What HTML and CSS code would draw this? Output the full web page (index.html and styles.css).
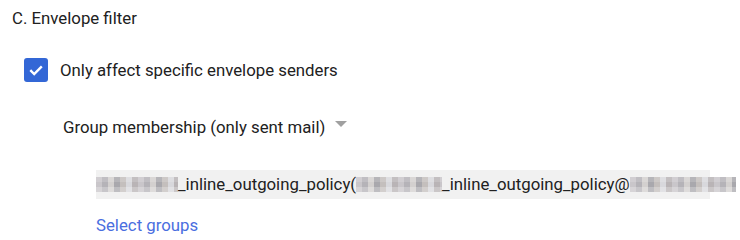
FILE: index.html
```html
<!DOCTYPE html>
<html>
<head>
<meta charset="utf-8">
<link rel="stylesheet" href="styles.css">
</head>
<body>
<div class="section">
  <div class="title">C. Envelope filter</div>
  <label class="check-row">
    <span class="checkbox">
      <svg width="16" height="16" viewBox="0 0 16 16"><path d="M2.3 8.2 L6.2 12 L13.8 4.4" fill="none" stroke="#fff" stroke-width="2.4"/></svg>
    </span>
    <span class="check-label">Only affect specific envelope senders</span>
  </label>
  <div class="select-row">
    <span class="select-label">Group membership (only sent mail)</span>
    <span class="caret"></span>
  </div>
  <div class="chip-row">
    <div class="chip"><span class="redact r1"></span>_inline_outgoing_policy(<span class="redact r2"></span>_inline_outgoing_policy@<span class="redact r3"></span></div>
  </div>
  <a class="link" href="#">Select groups</a>
</div>
</body>
</html>
```
FILE: styles.css
```css
html, body { margin: 0; padding: 0; background: #fff; }
body { font-family: Roboto, "Noto Sans", sans-serif; color: #212121; width: 740px; height: 240px; overflow: hidden; }
.section { padding: 7px 0 0 12px; display: flex; flex-direction: column; align-items: flex-start; width: 728px; height: 233px; overflow: hidden; }
.title { font-size: 16.8px; line-height: 22px; }
.check-row { display: flex; align-items: center; margin-top: 29px; margin-left: 12px; gap: 12px; }
.checkbox { width: 24px; height: 24px; border-radius: 3px; background: #3367d6; display: flex; align-items: center; justify-content: center; }
.check-label { font-size: 16.8px; line-height: 24px; }
.select-row { display: flex; align-items: center; margin-top: 33px; margin-left: 51px; gap: 10px; }
.select-label { font-size: 16.8px; line-height: 24px; }
.caret { width: 0; height: 0; border-left: 6.5px solid transparent; border-right: 6.5px solid transparent; border-top: 6px solid #a0a0a0; margin-top: -6px; }
.chip-row { margin-top: 31px; margin-left: 84px; width: 614px; }
.chip { background: #f1f1f1; height: 29px; line-height: 29px; font-size: 16.8px; white-space: nowrap; overflow: visible; }
.redact { display: inline-block; height: 15px; vertical-align: -2px;
  background:
    linear-gradient(180deg, rgba(255,255,255,0.15) 0 5px, rgba(0,0,0,0) 5px 10px, rgba(255,255,255,0.25) 10px),
    repeating-linear-gradient(90deg, #c9c6ca 0 6px, #b5b3b8 6px 12px, #d3d0cf 12px 18px, #a9a8ad 18px 24px, #c4bfbd 24px 30px, #d8d8dc 30px 36px, #b9b4b6 36px 42px); }
.r1 { width: 82px; }
.r2 { width: 86px; }
.r3 { width: 106px; }
.link { margin-top: 15px; margin-left: 84px; font-size: 16.8px; line-height: 22px; color: #4a6ee0; text-decoration: none; }
```
